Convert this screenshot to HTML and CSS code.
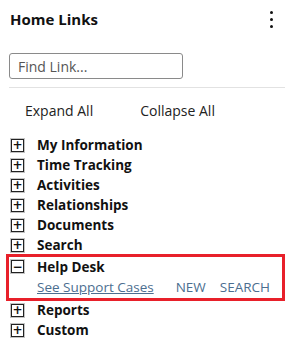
FILE: index.html
```html
<!DOCTYPE html>
<html lang="en">
  <head>
    <meta charset="UTF-8" />
    <title>Home Links</title>
    <link rel="stylesheet" href="styles.css">
  </head>
  <body>
    <div class="header">
      <h1>Home Links</h1>
      <span class="kebab"><i></i><i></i><i></i></span>
    </div>
    <div class="find">
      <input type="text" placeholder="Find Link..." />
    </div>
    <div class="actions">
      <a>Expand All</a>
      <a>Collapse All</a>
    </div>
    <ul class="tree">
      <li><span class="toggle">+</span>My Information</li>
      <li><span class="toggle">+</span>Time Tracking</li>
      <li><span class="toggle">+</span>Activities</li>
      <li><span class="toggle">+</span>Relationships</li>
      <li><span class="toggle">+</span>Documents</li>
      <li><span class="toggle">+</span>Search</li>
      <li class="open">
        <div class="node"><span class="toggle">&minus;</span>Help Desk</div>
        <div class="links">
          <a class="main">See Support Cases</a>
          <a>NEW</a>
          <a>SEARCH</a>
        </div>
      </li>
      <li><span class="toggle">+</span>Reports</li>
      <li><span class="toggle">+</span>Custom</li>
    </ul>
  </body>
</html>
```

FILE: styles.css
```css
body {
  margin: 0;
  font-family: "Open Sans", "Noto Sans", sans-serif;
  color: #111;
  background: #fff;
}
.header {
  display: flex;
  justify-content: space-between;
  align-items: center;
  padding: 8px 18px 0 10px;
  height: 22px;
}
h1 {
  margin: 0;
  font-size: 15px;
  font-weight: 700;
  color: #111;
}
.kebab {
  display: flex;
  flex-direction: column;
  gap: 4px;
}
.kebab i {
  width: 3px;
  height: 3px;
  border-radius: 50%;
  background: #111;
}
.find {
  padding: 23px 0 0 9px;
}
.find input {
  width: 174px;
  height: 26px;
  box-sizing: border-box;
  border: 1px solid #8a8a8a;
  border-radius: 3px;
  padding: 0 8px;
  font-family: inherit;
  font-size: 14px;
  color: #333;
}
.find input::placeholder {
  color: #555;
}
.actions {
  margin: 8px 6px 0 9px;
  border-top: 1px solid #e2e2e2;
  padding: 13px 0 0 16px;
  display: flex;
  gap: 47px;
  font-size: 14px;
  color: #222;
  height: 20px;
}
.tree {
  list-style: none;
  margin: 14px 0 0;
  padding: 0;
  font-size: 13.5px;
  font-weight: 700;
  color: #111;
  white-space: nowrap;
}
.tree li,
.tree .node {
  display: flex;
  align-items: center;
  height: 20px;
  padding-left: 11px;
}
.tree li.open {
  display: block;
  height: auto;
  padding: 0;
  margin: -1px 6px -1px 6px;
  border: 3px solid #e8202a;
}
.tree .node {
  padding-left: 2px;
  height: 19px;
}
.toggle {
  box-sizing: border-box;
  width: 13px;
  height: 13px;
  border: 1.5px solid #222;
  box-shadow: 0 0 0 1px #c4c4c4;
  display: flex;
  align-items: center;
  justify-content: center;
  font-family: "DejaVu Sans", sans-serif;
  font-size: 12px;
  line-height: 1;
  margin-right: 13px;
  font-weight: 700;
}
.links {
  display: flex;
  height: 22px;
  align-items: center;
  padding-left: 28px;
  font-size: 13.5px;
  font-weight: 400;
  color: #4b6e90;
}
.links a {
  margin-right: 14px;
}
.links a.main {
  text-decoration: underline;
  margin-right: 22px;
}
```
